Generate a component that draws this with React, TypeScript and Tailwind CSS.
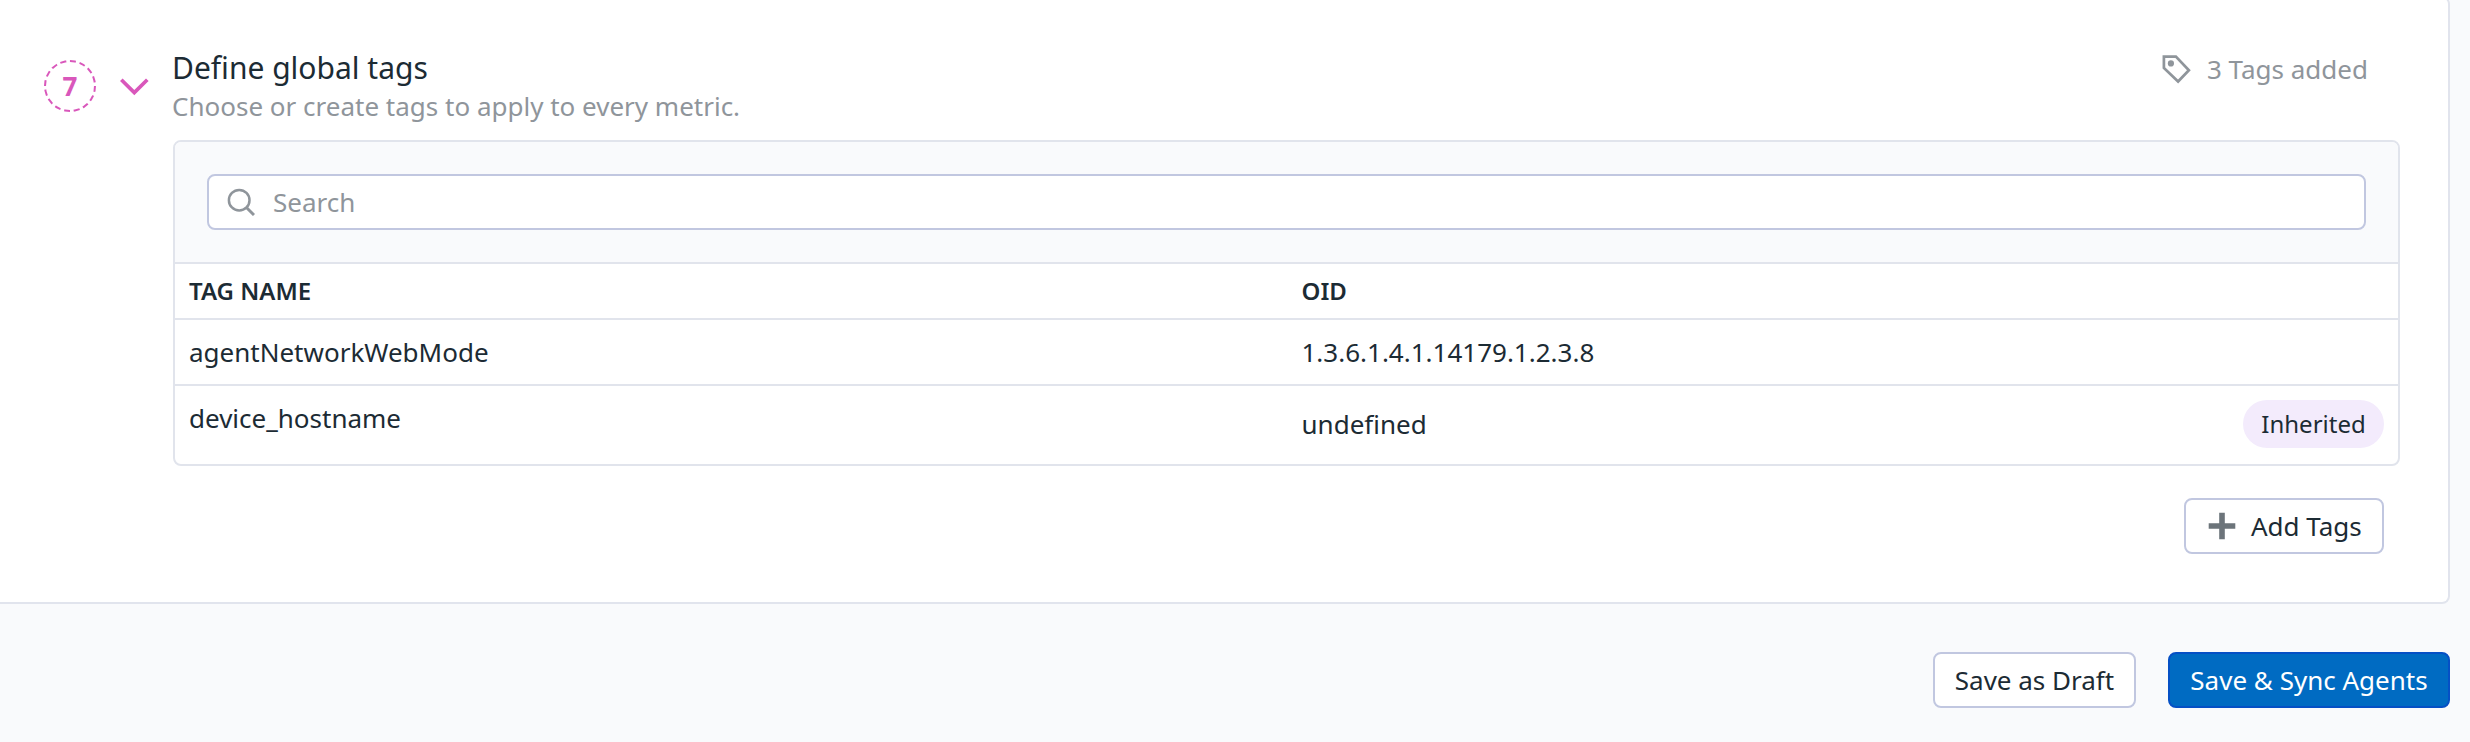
import type { ReactNode } from "react";

function StepBadge() {
  return (
    <div className="flex size-[52px] items-center justify-center rounded-full border-2 border-dashed border-[#d957bb] text-[26px] leading-none font-bold text-[#d957bb]">
      7
    </div>
  );
}

function ChevronIcon() {
  return (
    <svg className="mt-[78px] ml-6 shrink-0 text-[#d957bb]" width="29" height="18" viewBox="0 0 29 18" fill="none">
      <path d="M1.3 1.8 14.3 14.6 27.3 1.8" stroke="currentColor" strokeWidth="3.7" />
    </svg>
  );
}

function SearchIcon() {
  return (
    <svg className="shrink-0" width="28" height="28" viewBox="0 0 28 28" fill="none" stroke="currentColor">
      <circle cx="12.2" cy="12.2" r="10.3" strokeWidth="2.5" />
      <path d="M19.2 19.3 27 27" strokeWidth="3" />
    </svg>
  );
}

function TagIcon() {
  return (
    <svg className="shrink-0" width="29" height="29" viewBox="0 0 29 29">
      <path d="M1.9 1.6H13.9L26.9 15.2 16.1 26.5 1.9 12.9Z" fill="none" stroke="currentColor" strokeWidth="2.7" />
      <circle cx="8.9" cy="8.4" r="3.1" fill="currentColor" />
    </svg>
  );
}

function PlusIcon() {
  return (
    <svg className="shrink-0 text-[#6c747a]" width="28" height="28" viewBox="0 0 28 28" fill="currentColor">
      <path d="M11.2 .7h5.6v10.5h10.5v5.6H16.8v10.5h-5.6V16.8H.7v-5.6h10.5z" />
    </svg>
  );
}

function Button({ children, className }: { children: ReactNode; className: string }) {
  return (
    <button className={`flex h-14 items-center rounded-lg border-2 text-[26px] whitespace-nowrap ${className}`}>
      {children}
    </button>
  );
}

export default function App() {
  return (
    <div className="h-[742px] w-[2470px] overflow-hidden bg-[#f9fafc] font-['Noto_Sans',sans-serif] text-[26px] leading-9 text-[#1c2b34]">
      <section className="-mt-1 flex h-[608px] w-[2450px] rounded-r-lg border-y-2 border-r-2 border-[#e1e4ed] bg-white pt-0.5">
        <div className="ml-11 shrink-0 pt-[60px]">
          <StepBadge />
        </div>
        <ChevronIcon />
        <div className="ml-6 w-[2227px] shrink-0">
          <header className="flex h-[140px] justify-between pt-12">
            <div className="-ml-px">
              <h2 className="h-10 text-[30px] leading-10 whitespace-nowrap">Define global tags</h2>
              <p className="leading-9 whitespace-nowrap text-[#8f959b]">Choose or create tags to apply to every metric.</p>
            </div>
            <div className="mr-8 flex h-[42px] items-center gap-4 whitespace-nowrap text-[#8f959b]">
              <TagIcon />
              <span>3 Tags added</span>
            </div>
          </header>

          <div className="h-[326px] overflow-hidden rounded-lg border-2 border-[#e1e4ec] bg-white">
            <div className="border-b-2 border-[#e1e4ec] bg-[#f9fafc] p-8">
              <label className="flex h-14 items-center gap-[18px] rounded-lg border-2 border-[#c1c7e0] bg-white pr-4 pl-[18px] text-[#8f959b]">
                <SearchIcon />
                <input
                  className="min-w-0 flex-1 bg-transparent outline-none placeholder:text-[#8f959b] placeholder:opacity-100"
                  placeholder="Search"
                />
              </label>
            </div>
            <div className="grid h-14 grid-cols-2 items-center border-b-2 border-[#e1e4ec] text-[24px] font-semibold">
              <div className="pl-3.5">TAG NAME</div>
              <div className="pl-[15px]">OID</div>
            </div>
            <div className="grid h-[66px] grid-cols-2 items-center border-b-2 border-[#e1e4ec]">
              <div className="pl-3.5">agentNetworkWebMode</div>
              <div className="pl-[15px]">1.3.6.1.4.1.14179.1.2.3.8</div>
            </div>
            <div className="grid h-[78px] grid-cols-2 items-start pt-3.5">
              <div className="pl-3.5">device_hostname</div>
              <div className="flex h-12 items-center justify-between pr-3.5 pl-[15px]">
                <span>undefined</span>
                <span className="flex h-12 w-[141px] items-center justify-center rounded-full bg-[#f3ebfc] text-[24px]">
                  Inherited
                </span>
              </div>
            </div>
          </div>

          <div className="mt-8 flex justify-end pr-4">
            <Button className="w-[200px] gap-[15px] border-[#c1c7e0] bg-white pl-[22px]">
              <PlusIcon />
              <span>Add Tags</span>
            </Button>
          </div>
        </div>
      </section>

      <footer className="mt-12 flex justify-end gap-8 pr-5">
        <Button className="w-[203px] justify-center border-[#c1c7e0] bg-white">Save as Draft</Button>
        <Button className="w-[282px] justify-center border-[#0550c5] bg-[#006bc2] text-white">Save &amp; Sync Agents</Button>
      </footer>
    </div>
  );
}
